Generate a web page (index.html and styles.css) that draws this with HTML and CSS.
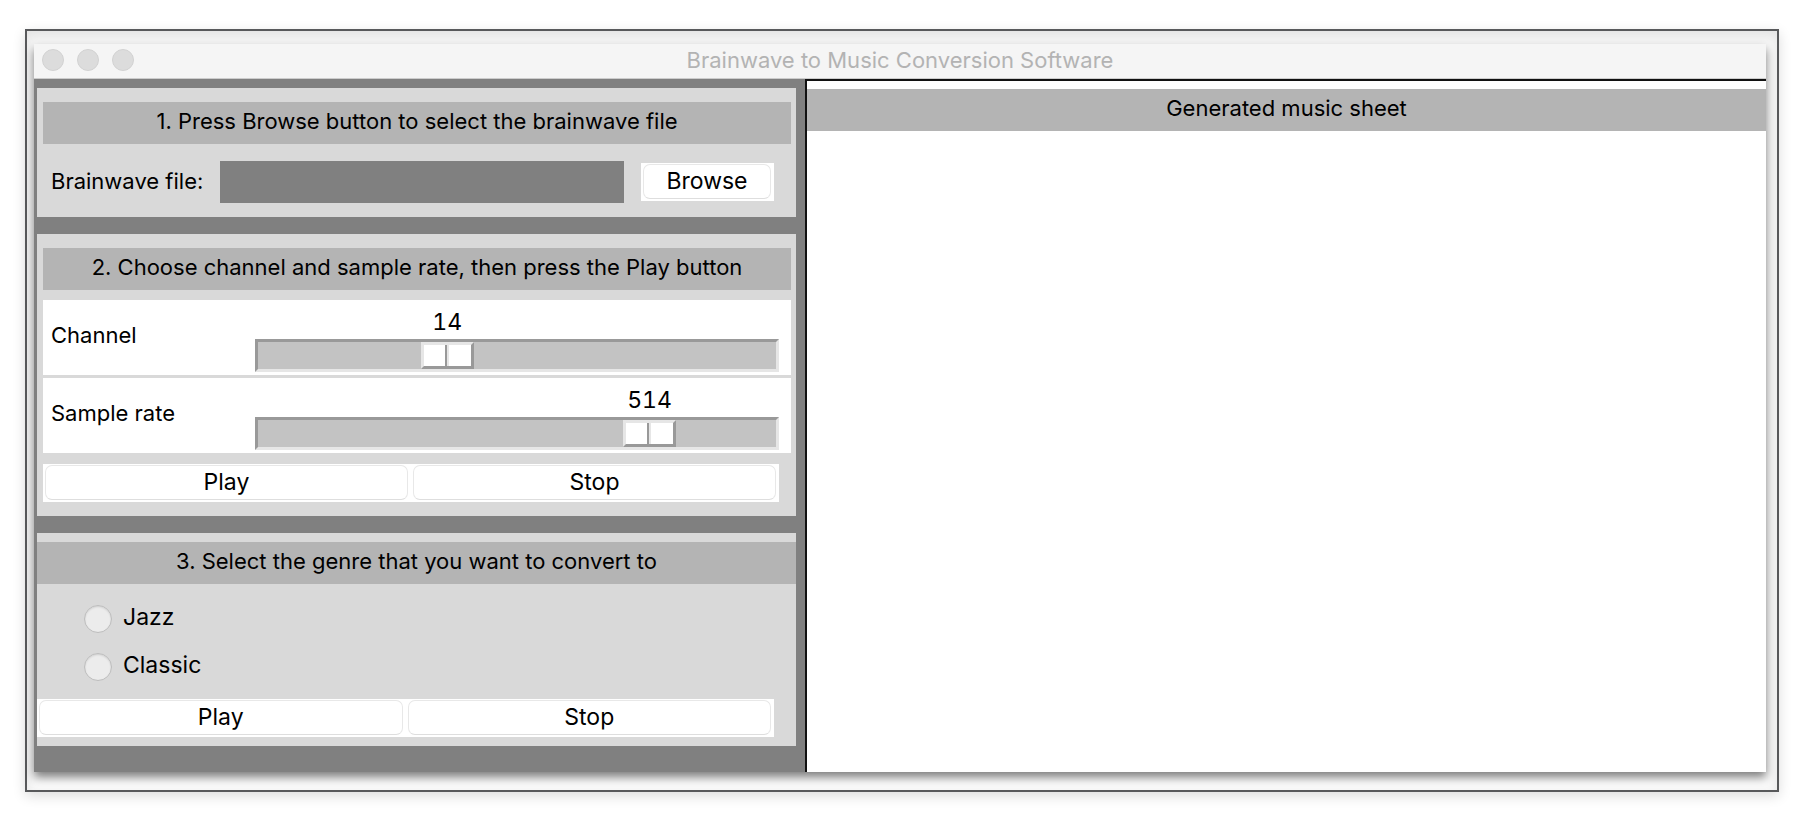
FILE: index.html
```
<!DOCTYPE html>
<html lang="en">
<head>
<meta charset="utf-8">
<title>Brainwave to Music Conversion Software</title>
<link rel="stylesheet" href="styles.css">
</head>
<body>
<div class="frame">
  <div class="window">
    <header class="titlebar">
      <div class="lights"><span class="light"></span><span class="light"></span><span class="light"></span></div>
      <h1 class="title">Brainwave to Music Conversion Software</h1>
    </header>
    <main class="content">
      <div class="controls">
        <section class="panel">
          <h2 class="heading">1. Press Browse button to select the brainwave file</h2>
          <div class="file-row">
            <label class="file-label" for="file">Brainwave file:</label>
            <input class="file-input" id="file" type="text">
            <div class="button-box browse"><button class="button" type="button">Browse</button></div>
          </div>
        </section>
        <section class="panel">
          <h2 class="heading">2. Choose channel and sample rate, then press the Play button</h2>
          <div class="sliders">
            <div class="slider-row">
              <label class="slider-label" for="channel">Channel</label>
              <div class="scale">
                <output class="value" for="channel" style="--pos: 0.35">14</output>
                <input class="range" id="channel" type="range" min="0" max="40" value="14">
              </div>
            </div>
            <div class="slider-row">
              <label class="slider-label" for="rate">Sample rate</label>
              <div class="scale">
                <output class="value" for="rate" style="--pos: 0.785">514</output>
                <input class="range" id="rate" type="range" min="0" max="655" value="514">
              </div>
            </div>
          </div>
          <div class="button-box pair">
            <button class="button" type="button">Play</button>
            <button class="button" type="button">Stop</button>
          </div>
        </section>
        <section class="panel genre">
          <h2 class="heading">3. Select the genre that you want to convert to</h2>
          <div class="options">
            <label class="option"><input class="radio" type="radio" name="genre">Jazz</label>
            <label class="option"><input class="radio" type="radio" name="genre">Classic</label>
          </div>
          <div class="button-box pair">
            <button class="button" type="button">Play</button>
            <button class="button" type="button">Stop</button>
          </div>
        </section>
      </div>
      <section class="sheet">
        <h2 class="heading">Generated music sheet</h2>
      </section>
    </main>
  </div>
</div>
</body>
</html>
```
FILE: styles.css
```
* { box-sizing: border-box; }

body {
  margin: 0;
  padding: 29px 31px 27px 25px;
  background: #fff;
  color: #000;
  font: 22px/28px Inter, "Liberation Sans", sans-serif;
}

h1, h2 { margin: 0; font: inherit; }

.frame {
  padding: 13px 11px 18px 7px;
  border: 2px solid #58595b;
  background: #fafafa;
  box-shadow: 0 4px 12px rgba(0, 0, 0, 0.14), inset 0 6px 12px rgba(0, 0, 0, 0.09);
}

.window { box-shadow: 0 5px 9px rgba(0, 0, 0, 0.5); }

.titlebar {
  display: grid;
  grid-template-columns: 1fr auto 1fr;
  align-items: center;
  height: 35px;
  padding: 0 8px 2px;
  border-bottom: 1px solid #ccc;
  background: #f5f5f5;
}

.lights { display: flex; gap: 13px; }

.light {
  width: 22px;
  height: 22px;
  border: 1px solid #d2d2d2;
  border-radius: 50%;
  background: #dcdcdc;
}

.title { color: #b3b3b3; }

.content {
  display: grid;
  grid-template-columns: 771fr 961fr;
}

.controls {
  display: flex;
  flex-direction: column;
  gap: 17px;
  padding: 9px 9px 26px 3px;
  background: #808080;
}

.panel {
  padding: 14px 5px 14px 6px;
  background: #d9d9d9;
}

.heading {
  padding: 5px 8px 9px;
  background: #b4b4b4;
  text-align: center;
}

.file-row {
  display: flex;
  align-items: center;
  gap: 17px;
  margin-top: 17px;
  padding: 0 17px 0 8px;
}

.file-label { padding-bottom: 2px; }

.file-input {
  flex: 1;
  min-width: 0;
  height: 42px;
  padding: 0 8px;
  border: 0;
  border-radius: 0;
  background: #808080;
  color: #000;
  font: inherit;
}

.button-box {
  display: flex;
  gap: 5px;
  height: 38px;
  padding: 1px 3px 2px 2px;
  background: #fff;
}

.browse { width: 133px; }

.pair { margin-right: 12px; }

.button {
  flex: 1;
  padding: 0 0 1px;
  border: 1px solid #e8e8e8;
  border-bottom-color: #dedede;
  border-radius: 7px;
  background: #fff;
  color: #000;
  font: inherit;
  font-size: 23px;
}

.sliders {
  display: flex;
  flex-direction: column;
  gap: 3px;
  margin: 10px 0 11px;
}

.slider-row {
  display: grid;
  grid-template-columns: 204px 1fr;
  align-items: center;
  padding: 8px 12px 3px 8px;
  background: #fff;
}

.slider-label { padding-bottom: 10px; }

.scale { display: grid; }

.value {
  width: 53px;
  margin-left: calc(3px + (100% - 59px) * var(--pos));
  padding-bottom: 3px;
  font-size: 23px;
  font-variant-numeric: tabular-nums;
  text-align: center;
}

.range {
  appearance: none;
  width: 100%;
  height: 33px;
  margin: 0;
  border: 3px solid;
  border-color: #999 #e6e6e6 #e6e6e6 #999;
  background: #c3c3c3;
}

.range::-webkit-slider-thumb {
  appearance: none;
  width: 53px;
  height: 27px;
  border: 3px solid;
  border-color: #e6e6e6 #999 #999 #e6e6e6;
  border-radius: 0;
  background: linear-gradient(90deg, #fff 21px, #999 21px, #999 23px, #e6e6e6 23px, #e6e6e6 25px, #fff 25px);
}

.genre { padding: 9px 0; }

.genre .pair { margin-right: 22px; }

.options {
  display: flex;
  flex-direction: column;
  gap: 20px;
  padding: 21px 47px 18px;
}

.option {
  display: flex;
  align-items: flex-start;
  gap: 11px;
  font-size: 23px;
  line-height: 24px;
}

.radio {
  appearance: none;
  width: 28px;
  height: 28px;
  margin: 0;
  border: 1px solid #bdbdbd;
  border-radius: 50%;
  background: #ececec;
  box-shadow: inset 0 1px 2px rgba(0, 0, 0, 0.12);
}

.sheet {
  padding-top: 8px;
  border: solid #111;
  border-width: 2px 0 0 2px;
  background: #fff;
}
```
